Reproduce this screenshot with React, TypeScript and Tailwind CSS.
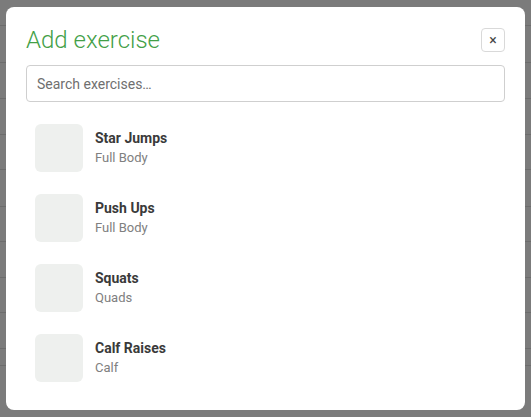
import React from 'react';

const exercises = [
  { name: 'Star Jumps', group: 'Full Body' },
  { name: 'Push Ups', group: 'Full Body' },
  { name: 'Squats', group: 'Quads' },
  { name: 'Calf Raises', group: 'Calf' },
];

// faint rows of the page behind the overlay
const rowTops = [25, 62, 98, 134, 169, 206, 241, 277, 312, 348, 365];

const App = () => {
  return (
    <div
      className="relative h-[417px] w-[531px] overflow-hidden bg-[#7b7b7b]"
      style={{ fontFamily: 'Roboto, "Liberation Sans", sans-serif' }}
    >
      {rowTops.map((top) => (
        <div key={top} className="absolute left-0 right-0 h-px bg-[#6c6c6c]" style={{ top }} />
      ))}

      <div className="absolute left-[6px] top-[7px] flex h-[403px] w-[519px] flex-col rounded-lg bg-white px-5 pt-[19px]">
        <div className="flex h-[28px] items-center justify-between">
          <h2 className="text-[24px] font-light leading-7 text-[#43a047]">Add exercise</h2>
          <button className="flex h-6 w-6 items-center justify-center rounded border border-[#d9d9d9] text-[14px] leading-none text-[#444]">
            ×
          </button>
        </div>

        <input
          placeholder="Search exercises…"
          className="mt-[11px] h-[37px] w-full rounded border border-[#cfcfcf] px-[10px] text-[14px] text-[#333] outline-none placeholder:text-[#6f6f6f]"
        />

        <ul className="mt-[11px] flex flex-col">
          {exercises.map((ex) => (
            <li key={ex.name} className="flex items-center gap-3 px-[9px] py-[11px]">
              <div className="h-12 w-12 rounded-md bg-[#eef0ee]" />
              <div className="flex flex-col">
                <span className="text-[14px] font-bold leading-5 text-[#3a3a3a]">{ex.name}</span>
                <span className="text-[13px] leading-5 text-[#808080]">{ex.group}</span>
              </div>
            </li>
          ))}
        </ul>
      </div>
    </div>
  );
};

export default App;
